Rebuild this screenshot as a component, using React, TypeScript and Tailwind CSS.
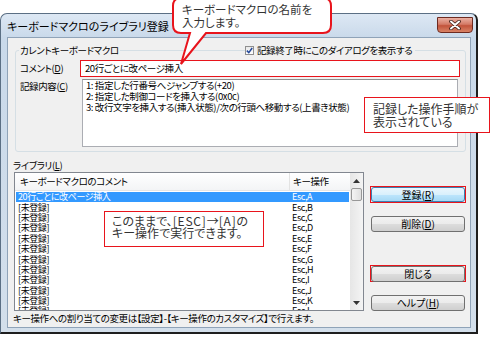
import React from 'react';

const ui = "[font-family:'Noto_Sans_CJK_JP',sans-serif] [font-feature-settings:'palt']";
const note = "[font-family:'Noto_Sans_CJK_JP',sans-serif] text-[#333]";

const keys = ['A', 'B', 'C', 'D', 'E', 'F', 'G', 'H', 'I', 'J', 'K', 'L'];
const rows = keys.map((k, i) => ({
  c: i === 0 ? '20行ごとに改ページ挿入' : '[未登録]',
  k: `Esc,${k}`,
  sel: i === 0,
}));

function Hot({ t }: { t: string }) {
  return <span className="underline underline-offset-1">{t}</span>;
}

function Btn({ children, def = false }: { children: React.ReactNode; def?: boolean }) {
  return (
    <div
      className={
        def
          ? 'w-[94px] h-[15px] rounded-[3px] border border-[#3c7fb1] bg-[linear-gradient(#eaf6fd_0%,#d9f0fc_50%,#bee6fd_50%,#a7d9f5_100%)] flex items-center justify-center text-[10px] leading-none'
          : 'w-[94px] h-[16px] rounded-[3px] border border-[#707070] bg-[linear-gradient(#f2f2f2_0%,#ebebeb_50%,#dddddd_50%,#cfcfcf_100%)] flex items-center justify-center text-[10px] leading-none'
      }
    >
      {children}
    </div>
  );
}

function Arrow({ up }: { up?: boolean }) {
  return (
    <div className="h-[15px] flex items-center justify-center">
      <svg width="7" height="4" viewBox="0 0 7 4">
        <polygon points={up ? '0,4 3.5,0 7,4' : '0,0 3.5,4 7,0'} fill="#333" />
      </svg>
    </div>
  );
}

export default function App() {
  return (
    <div className={`relative w-[496px] h-[337px] overflow-hidden bg-white text-black ${ui}`}>
      {/* window */}
      <div className="mt-[13px] w-[478px] h-[321px] rounded-t-[7px] border border-[#5b6f84] border-r-2 border-b-2 border-r-[#1e1e1e] border-b-[#1e1e1e] bg-[linear-gradient(#dde8f4,#c9d9ea_24px,#d3dfeb)] pl-[6px] flex flex-col">
        {/* title bar */}
        <div className="h-[23px] flex items-start">
          <div className="pt-[5px] text-[11px] leading-[14px]">キーボードマクロのライブラリ登録</div>
          <div className="ml-auto mr-[3px] mt-[3px] w-[36px] h-[16px] rounded-b-[4px] border border-[#6d2a20] bg-[linear-gradient(#eab0a2,#d47a66_45%,#c2533b_55%,#d98366)] flex items-center justify-center">
            <svg width="12" height="10" viewBox="0 0 12 10">
              <path d="M2 1.5 L10 8.5 M10 1.5 L2 8.5" stroke="#3b1c16" strokeWidth="3.6" strokeLinecap="round" />
              <path d="M2 1.5 L10 8.5 M10 1.5 L2 8.5" stroke="#fff" strokeWidth="2" strokeLinecap="round" />
            </svg>
          </div>
        </div>

        {/* client */}
        <div className="w-[464px] h-[291px] bg-[#f0f0f0] border border-[#8fa3b8] flex flex-col text-[9.5px] tracking-[-0.4px]">
          {/* current macro group */}
          <div className="ml-[7px] mt-[12px] w-[451px] h-[102px] shrink-0 border border-[#d5dfe5] rounded-[3px] flex flex-col">
            <div className="-mt-[8px] h-[14px] flex items-center">
              <div className="w-[229px]">
                <span className="ml-[3px] px-[1px] bg-[#f0f0f0]">カレントキーボードマクロ</span>
              </div>
              <div className="flex items-center bg-[#f0f0f0] pr-[3px]">
                <div className="w-[9px] h-[9px] border border-[#8f8f8f] bg-[linear-gradient(#e8e8e8,#fff)] flex items-center justify-center">
                  <svg width="7" height="7" viewBox="0 0 7 7">
                    <path d="M0.8 3.6 L2.8 5.6 L6.2 1" stroke="#23489a" strokeWidth="1.5" fill="none" />
                  </svg>
                </div>
                <span className="ml-[3px]">記録終了時にこのダイアログを表示する</span>
              </div>
            </div>

            <div className="mt-[3px] h-[17px] flex items-center">
              <div className="w-[64px] pl-[4px]">
                コメント(<Hot t="D" />)
              </div>
              <div className="w-[380px] h-[17px] border border-[#e8141c] bg-white pl-[4px] flex items-center">
                20行ごとに改ページ挿入
              </div>
            </div>

            <div className="mt-[2px] flex">
              <div className="w-[66px] pl-[4px] pt-[1px] leading-[12px]">
                記録内容(<Hot t="C" />)
              </div>
              <div className="w-[376px] h-[68px] border border-[#abadb3] border-t-[#8e8f8f] bg-white pl-[3px] leading-[11px]">
                <div>1: 指定した行番号へジャンプする(+20)</div>
                <div>2: 指定した制御コードを挿入する(0x0c)</div>
                <div>3: 改行文字を挿入する(挿入状態)/次の行頭へ移動する(上書き状態)</div>
              </div>
            </div>
          </div>

          {/* library */}
          <div className="flex">
            <div className="ml-[5px] flex flex-col">
              <div className="mt-[6px] h-[14px] leading-[14px]">
                ライブラリ(<Hot t="L" />)
              </div>
              <div className="ml-[1px] w-[350px] h-[139px] border border-[#828790] bg-white flex">
                <div className="w-[335px] flex flex-col">
                  <div className="h-[18px] shrink-0 flex border-b border-[#e5e5e5] bg-[linear-gradient(#ffffff,#f3f4f6)]">
                    <div className="w-[275px] pl-[5px] border-r border-[#e3e3e3] flex items-center">キーボードマクロのコメント</div>
                    <div className="pl-[3px] flex items-center">キー操作</div>
                  </div>
                  <div className="flex-1 overflow-hidden pt-[1px] text-[9px]">
                    {rows.map((r) => (
                      <div
                        key={r.k}
                        className={
                          r.sel
                            ? 'mx-[1px] h-[10.4px] flex items-center bg-[#3399ff] text-white leading-[10px]'
                            : 'mx-[1px] h-[10.4px] flex items-center leading-[10px]'
                        }
                      >
                        <div className="w-[274px] pl-[2px]">{r.c}</div>
                        <div className="pl-[2px]">{r.k}</div>
                      </div>
                    ))}
                  </div>
                </div>
                <div className="w-[13px] flex flex-col bg-[linear-gradient(90deg,#e6e6e6,#f4f4f4)]">
                  <Arrow up />
                  <div className="h-[13px] mx-[1px] rounded-[2px] border border-[#979797] bg-[linear-gradient(90deg,#f4f4f4,#e0e0e0)]" />
                  <div className="flex-1" />
                  <Arrow />
                </div>
              </div>
            </div>

            <div className="ml-[6px] flex flex-col tracking-normal">
              <div className="mt-[34px] w-[96px] h-[17px] border border-[#e8141c] flex items-center justify-center">
                <Btn def>
                  登録(<Hot t="R" />)
                </Btn>
              </div>
              <div className="mt-[13px] ml-[1px]">
                <Btn>
                  削除(<Hot t="D" />)
                </Btn>
              </div>
              <div className="mt-[33px] w-[96px] h-[17px] border border-[#e8141c] flex items-center justify-center">
                <Btn>閉じる</Btn>
              </div>
              <div className="mt-[13px] ml-[1px]">
                <Btn>
                  ヘルプ(<Hot t="H" />)
                </Btn>
              </div>
            </div>
          </div>

          <div className="mt-[1px] pl-[5px] h-[12px] leading-[12px]">
            キー操作への割り当ての変更は【設定】-【キー操作のカスタマイズ】で行えます。
          </div>
        </div>
      </div>

      {/* callout: name */}
      <svg className="absolute left-[168px] top-[-4px]" width="170" height="72" viewBox="168 -4 170 72">
        <path
          d="M181,-2 H323 Q331,-2 331,6 V25 Q331,33 323,33 H206 L181,64 L190,33 H181 Q173,33 173,25 V6 Q173,-2 181,-2 Z"
          fill="#fff"
          stroke="#e8141c"
          strokeWidth="2"
        />
      </svg>
      <div className={`absolute left-[182px] top-[3px] text-[11.5px] leading-[13px] ${note}`}>
        <div>キーボードマクロの名前を</div>
        <div>入力します。</div>
      </div>

      {/* callout: recorded steps */}
      <div className={`absolute left-[364px] top-[97px] w-[126px] h-[36px] border border-[#e8141c] bg-white pl-[8px] pt-[4px] text-[12px] leading-[13px] ${note}`}>
        <div>記録した操作手順が</div>
        <div>表示されている</div>
      </div>

      {/* callout: key */}
      <div className={`absolute left-[104px] top-[211px] w-[160px] h-[36px] border border-[#e8141c] bg-white pl-[7px] pt-[3px] text-[12px] leading-[12px] ${note}`}>
        <div>
          このままで、<span className="tracking-[0.8px]">[ESC]</span>→<span className="tracking-[0.8px]">[A]</span>の
        </div>
        <div>キー操作で実行できます。</div>
      </div>
    </div>
  );
}
